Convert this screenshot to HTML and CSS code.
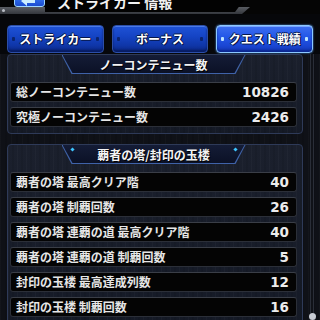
FILE: index.html
```html
<!DOCTYPE html>
<html lang="ja">
<head>
<meta charset="utf-8">
<link rel="stylesheet" href="styles.css">
</head>
<body>
<div class="header">
  <div class="strip"><span class="dot"></span></div>
  <div class="plate"><span class="title">ストライカー 情報</span></div>
  <div class="back">
    <svg width="16" height="10" viewBox="0 0 16 10"><path d="M1 5 L7 0 L7 3 L15 3 L15 7 L7 7 L7 10 Z" fill="#cdeeff"/></svg>
  </div>
</div>
<div class="tabs">
  <div class="tab"><i class="mk"></i><span>ストライカー</span><i class="mk"></i></div>
  <div class="tab"><i class="mk"></i><span>ボーナス</span><i class="mk"></i></div>
  <div class="tab active"><i class="mk"></i><span>クエスト戦績</span><i class="mk"></i></div>
</div>
<div class="main">
  <div class="content">
    <section class="panel">
      <div class="head"><div class="head-in">ノーコンテニュー数</div></div>
      <div class="rows">
        <div class="row"><span>総ノーコンテニュー数</span><span class="num">10826</span></div>
        <div class="row"><span>究極ノーコンテニュー数</span><span class="num">2426</span></div>
      </div>
    </section>
    <section class="panel second">
      <div class="head"><div class="head-in"><i class="gem"></i>覇者の塔/封印の玉楼<i class="gem"></i></div></div>
      <div class="rows">
        <div class="row"><span>覇者の塔 最高クリア階</span><span class="num">40</span></div>
        <div class="row"><span>覇者の塔 制覇回数</span><span class="num">26</span></div>
        <div class="row"><span>覇者の塔 連覇の道 最高クリア階</span><span class="num">40</span></div>
        <div class="row"><span>覇者の塔 連覇の道 制覇回数</span><span class="num">5</span></div>
        <div class="row"><span>封印の玉楼 最高達成列数</span><span class="num">12</span></div>
        <div class="row"><span>封印の玉楼 制覇回数</span><span class="num">16</span></div>
      </div>
    </section>
  </div>
  <div class="scroll"><div class="track"></div><div class="knob"></div></div>
</div>
</body>
</html>
```
FILE: styles.css
```css
* { box-sizing: border-box; }
html, body {
  margin: 0;
  width: 320px;
  height: 320px;
  overflow: hidden;
}
body {
  background: #06070a;
  font-family: "Noto Sans CJK JP", "Noto Sans", sans-serif;
  color: #e8e8e8;
}
.header {
  position: relative;
  height: 14px;
  background: #050505;
}
.strip {
  position: absolute;
  left: 0;
  top: 7px;
  width: 250px;
  height: 7px;
  background: linear-gradient(#5a5d63, #33363c);
  clip-path: polygon(0 0, 100% 0, calc(100% - 8px) 100%, 0 100%);
}
.dot {
  position: absolute;
  left: 2px;
  top: 2px;
  width: 3px;
  height: 3px;
  border-radius: 50%;
  background: #b8bcc4;
}
.plate {
  position: absolute;
  left: 45px;
  top: 0;
  width: 199px;
  height: 12px;
  background: #020202;
  clip-path: polygon(0 0, 100% 0, calc(100% - 9px) 100%, 0 100%);
  padding-left: 12px;
  overflow: hidden;
}
.title {
  display: block;
  margin-top: -5px;
  font-size: 14px;
  line-height: 14px;
  font-weight: 700;
  color: #f2f2f2;
}
.back {
  position: absolute;
  left: 14px;
  top: -5px;
  width: 31px;
  height: 12px;
  border-radius: 3px;
  border: 1px solid #9fd6ff;
  background: linear-gradient(#3a7cf5, #1a4bd0);
  display: flex;
  align-items: flex-end;
  padding-left: 5px;
}
.back svg { display: block; }
.tabs {
  margin-top: 11px;
  padding: 0 7px;
  display: grid;
  grid-template-columns: 1fr 1fr 1fr;
  gap: 8px;
}
.tab {
  height: 28px;
  border-radius: 4px;
  border: 1px solid #2c4ea8;
  background: linear-gradient(#1f52d6 0%, #1544c4 40%, #0f36a8 75%, #0a2680 100%);
  box-shadow: inset 0 1px 0 #4a7ae6, inset 0 -2px 2px #081c60;
  display: flex;
  align-items: center;
  justify-content: space-between;
  padding: 0 4px;
  font-size: 12px;
  font-weight: 700;
  color: #ffffff;
  text-shadow: 1px 1px 0 #06164a, -1px 0 0 #06164a, 0 -1px 0 #06164a, 1px 0 0 #06164a;
}
.tab span { line-height: 14px; }
.mk {
  width: 3px;
  height: 4px;
  background: #0a2470;
  border-radius: 1px;
}
.tab.active {
  border: 1px solid #8cc8ff;
  background: linear-gradient(#3d6ff0 0%, #2458e8 40%, #1a46d4 75%, #1436b0 100%);
  box-shadow: 0 0 2px #5aa0ff, inset 0 1px 0 #7aa6ff, inset 0 -2px 2px #0c2890;
}
.tab.active .mk { background: #bde6ff; }
.main {
  display: flex;
  align-items: flex-start;
  margin-top: 1px;
  height: 266px;
  background:
    repeating-linear-gradient(90deg, rgba(255,255,255,0.02) 0 1px, transparent 1px 5px, rgba(0,0,0,0.1) 5px 7px, transparent 7px 11px),
    #0f1117;
}
.content {
  margin-left: 7px;
  width: 296px;
}
.panel {
  border: 1px solid #2e3a58;
  border-radius: 4px;
  background:
    repeating-linear-gradient(90deg, rgba(255,255,255,0.025) 0 1px, transparent 1px 4px, rgba(0,0,0,0.08) 4px 6px, transparent 6px 9px),
    linear-gradient(#1b202d, #151a26);
  padding: 0 5px 6px 2px;
}
.panel.second {
  margin-top: 10px;
  padding-bottom: 10px;
}
.head {
  width: 184px;
  height: 19px;
  margin: 0 auto 8px;
  background: #3f62a8;
  clip-path: polygon(0 0, 100% 0, calc(100% - 10px) 100%, 10px 100%);
  padding: 0 1px 1px;
}
.head-in {
  height: 100%;
  background: linear-gradient(#141c36, #0b1126);
  clip-path: polygon(0 0, 100% 0, calc(100% - 10px) 100%, 10px 100%);
  display: flex;
  align-items: center;
  justify-content: center;
  font-size: 12px;
  font-weight: 700;
  color: #f4f4f4;
  text-shadow: 1px 1px 0 #000;
  position: relative;
}
.gem {
  position: absolute;
  top: 3px;
  width: 3px;
  height: 3px;
  background: #3ec6ff;
  transform: rotate(45deg);
}
.gem:first-child { left: 8px; }
.gem:last-child { right: 8px; }
.rows {
  display: flex;
  flex-direction: column;
  gap: 5px;
}
.row {
  height: 20px;
  border: 1px solid #2b2f38;
  border-top-color: #3a3e47;
  border-radius: 3px;
  background: #040404;
  display: flex;
  align-items: center;
  justify-content: space-between;
  padding: 0 7px 0 5px;
  font-size: 12px;
  font-weight: 700;
  color: #e6e6e6;
  white-space: nowrap;
}
.row span { line-height: 14px; }
.num {
  font-family: "DejaVu Sans", sans-serif;
  font-size: 13.5px;
  font-weight: 700;
  color: #ececec;
}
.scroll {
  margin-left: 5px;
  width: 8px;
  display: flex;
  flex-direction: column;
  align-items: center;
}
.track {
  width: 4px;
  height: 259px;
  background: #101218;
  border-left: 1px solid #2a2e38;
  border-right: 1px solid #2a2e38;
}
.knob {
  width: 7px;
  height: 7px;
  border-radius: 50%;
  background: #c8ccd4;
}
```
